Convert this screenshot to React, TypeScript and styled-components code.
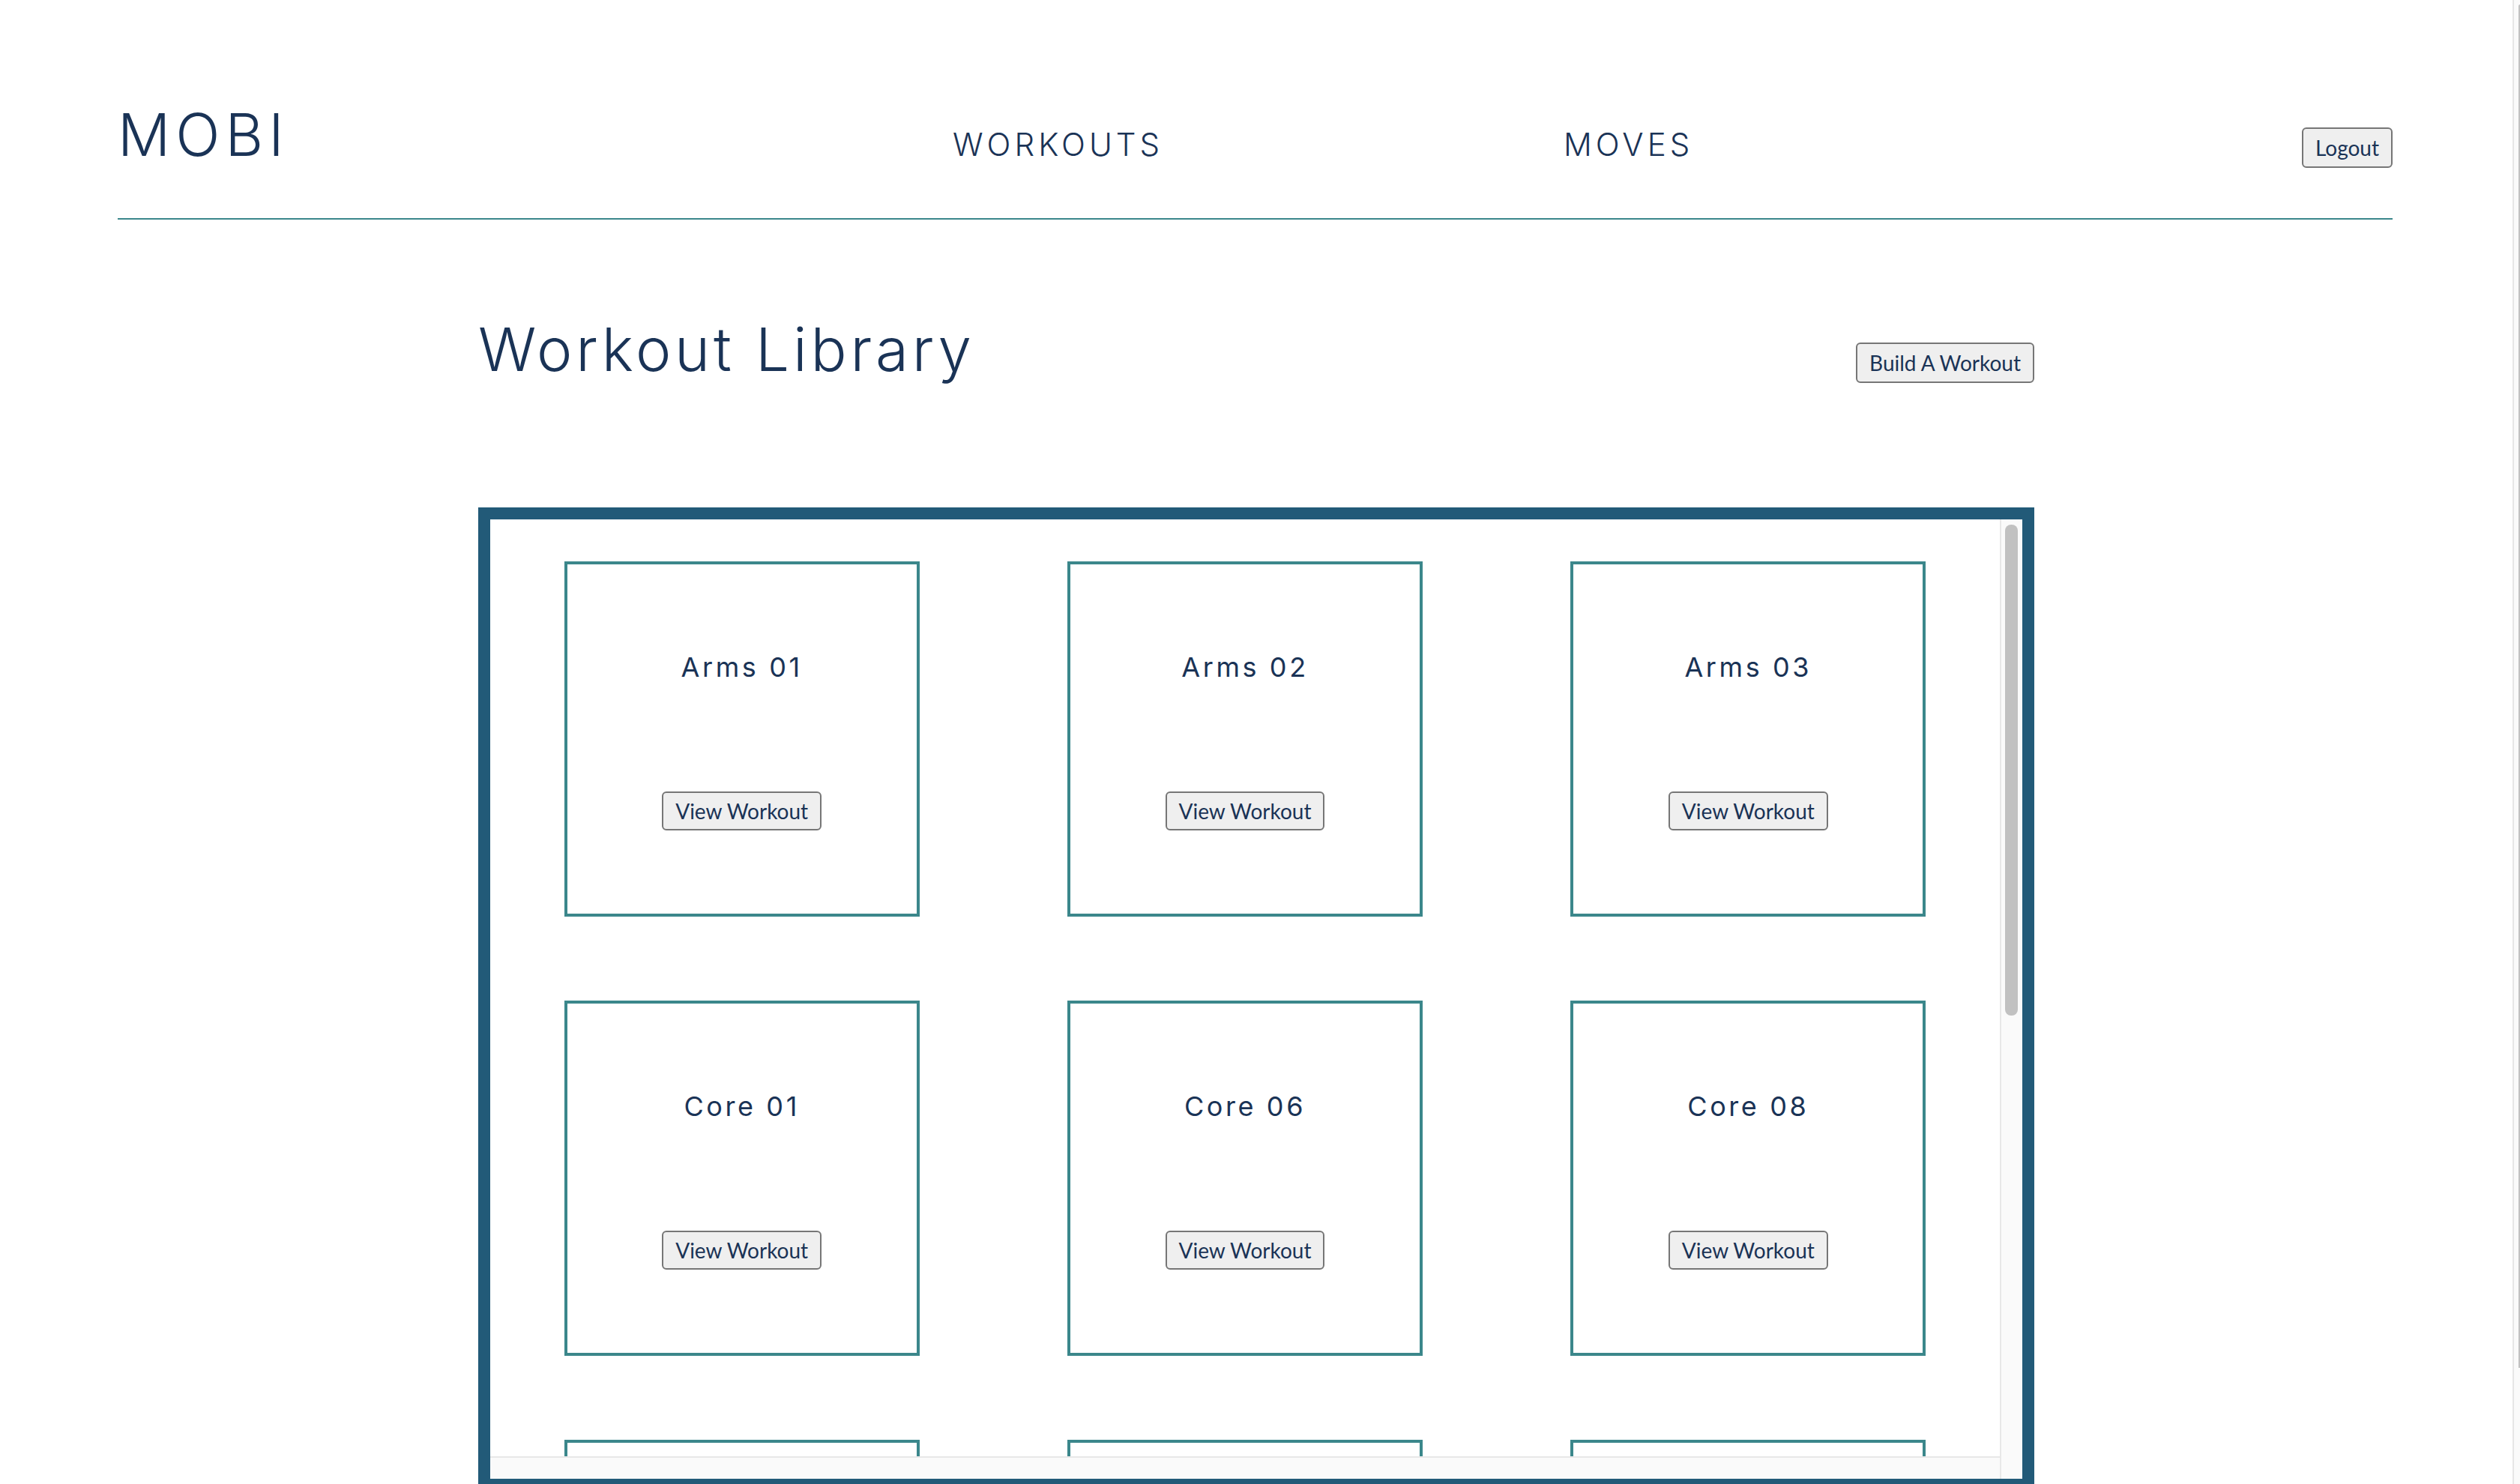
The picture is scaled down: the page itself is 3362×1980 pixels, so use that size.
import styled, { createGlobalStyle } from "styled-components";

const NAVY = "#1a3356";
const TEAL = "#3b878b";
const FRAME = "#225a78";

const WORKOUTS = [
  "Arms 01",
  "Arms 02",
  "Arms 03",
  "Core 01",
  "Core 06",
  "Core 08",
  "Legs 01",
  "Legs 02",
  "Legs 04",
  "Full Body 01",
  "Full Body 02",
  "Glutes 01",
];

const GlobalStyle = createGlobalStyle`
  body {
    margin: 0;
    background: #fff;
    color: ${NAVY};
    font-family: Inter, "Liberation Sans", sans-serif;
  }
`;

const Window = styled.div`
  display: flex;
  align-items: flex-start;
`;

const Page = styled.div`
  flex: 1;
  min-width: 0;
  padding-bottom: 170px;
`;

// the window's own scrollbar, cut by the right edge of the picture
const PageTrack = styled.div`
  flex: 0 0 10px;
  height: 1980px;
  box-sizing: border-box;
  background: #fafafa;
  border-left: 2px solid #e6e6e6;
  display: flex;
  justify-content: flex-end;
`;

const PageThumb = styled.div`
  width: 2px;
  height: 1819px;
  margin-top: 6px;
  background: #c1c1c1;
  border-top-left-radius: 2px;
`;

const Header = styled.header`
  display: flex;
  align-items: baseline;
  margin: 0 160px 0 157px;
  padding: 132px 0 64px;
  border-bottom: 2px solid ${TEAL};
`;

const Logo = styled.div`
  font-size: 78px;
  font-weight: 300;
  letter-spacing: 0.09em;
  width: 1114px;
`;

const NavLink = styled.a<{ $width: number }>`
  font-size: 42px;
  font-weight: 300;
  letter-spacing: 0.12em;
  color: ${NAVY};
  text-decoration: none;
  width: ${({ $width }) => $width}px;
`;

const Button = styled.button`
  font-family: Lato, "Liberation Sans", sans-serif;
  font-size: 28px;
  color: ${NAVY};
  background: #efefef;
  border: 2px solid #767676;
  border-radius: 6px;
  padding: 0 16px;
  height: 54px;
  cursor: pointer;
`;

const LogoutButton = styled(Button)`
  margin-left: auto;
`;

const Library = styled.main`
  width: 2076px;
  margin: 0 auto;
`;

const TitleRow = styled.div`
  display: flex;
  align-items: baseline;
  justify-content: space-between;
  margin-top: 124px;
`;

const Title = styled.h1`
  margin: 0;
  font-size: 80px;
  font-weight: 300;
  letter-spacing: 0.06em;
`;

const Frame = styled.div`
  box-sizing: border-box;
  height: 1312px;
  margin-top: 163px;
  border: 16px solid ${FRAME};
  display: grid;
  grid-template-columns: 1fr 30px;
  grid-template-rows: 1fr 30px;
`;

const Viewport = styled.div`
  overflow: hidden;
  min-height: 0;
`;

const VTrack = styled.div`
  box-sizing: border-box;
  background: #fafafa;
  border-left: 2px solid #e8e8e8;
  padding: 7px 6px 0 5px;
`;

const VThumb = styled.div`
  height: 655px;
  background: #c1c1c1;
  border-radius: 8px;
`;

const HTrack = styled.div`
  background: #fafafa;
  border-top: 2px solid #e8e8e8;
`;

const Corner = styled.div`
  background: #fafafa;
  border-left: 2px solid #e8e8e8;
`;

const Grid = styled.div`
  display: flex;
  flex-wrap: wrap;
  justify-content: space-around;
`;

const Card = styled.div`
  box-sizing: border-box;
  width: 474px;
  height: 474px;
  margin: 56px;
  border: 4px solid ${TEAL};
  display: flex;
  flex-direction: column;
  align-items: center;
`;

const CardTitle = styled.h3`
  margin: 115px 0 0;
  font-size: 36px;
  font-weight: 400;
  letter-spacing: 0.1em;
`;

const ViewButton = styled(Button)`
  margin-top: 144px;
  height: 52px;
`;

export default function App() {
  return (
    <Window>
      <GlobalStyle />
      <Page>
        <Header>
          <Logo>MOBI</Logo>
          <NavLink href="#" $width={815}>
            WORKOUTS
          </NavLink>
          <NavLink href="#" $width={300}>
            MOVES
          </NavLink>
          <LogoutButton>Logout</LogoutButton>
        </Header>
        <Library>
          <TitleRow>
            <Title>Workout Library</Title>
            <Button>Build A Workout</Button>
          </TitleRow>
          <Frame>
            <Viewport>
              <Grid>
                {WORKOUTS.map(name => (
                  <Card key={name}>
                    <CardTitle>{name}</CardTitle>
                    <ViewButton>View Workout</ViewButton>
                  </Card>
                ))}
              </Grid>
            </Viewport>
            <VTrack>
              <VThumb />
            </VTrack>
            <HTrack />
            <Corner />
          </Frame>
        </Library>
      </Page>
      <PageTrack>
        <PageThumb />
      </PageTrack>
    </Window>
  );
}
